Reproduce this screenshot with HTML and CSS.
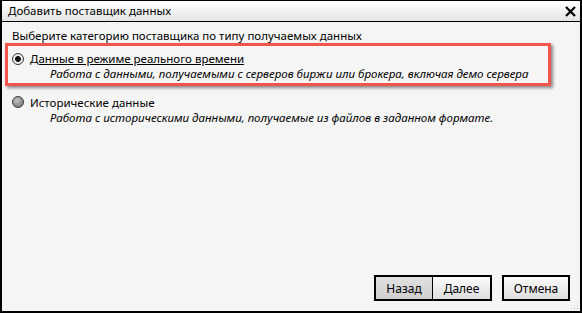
FILE: index.html
```html
<!DOCTYPE html>
<html lang="ru">
<head>
    <meta charset="UTF-8">
    <title>Добавить поставщик данных</title>
    <link rel="stylesheet" href="styles.css">
</head>
<body>
    <div class="window">
        <div class="titlebar">
            <span class="title">Добавить поставщик данных</span>
            <svg class="close" width="11" height="11" viewBox="0 0 11 11">
                <path d="M1 1 L10 10 M10 1 L1 10" stroke="#000" stroke-width="2.2"/>
            </svg>
        </div>

        <div class="content">
            <div class="heading">Выберите категорию поставщика по типу получаемых данных</div>

            <div class="highlight">
                <div class="option">
                    <span class="radio checked"></span>
                    <span class="label selected">Данные в режиме реального времени</span>
                </div>
                <div class="desc">Работа с данными, получаемыми с серверов биржи или брокера, включая демо сервера</div>
            </div>

            <div class="plain">
                <div class="option">
                    <span class="radio"></span>
                    <span class="label">Исторические данные</span>
                </div>
                <div class="desc">Работа с историческими данными, получаемые из файлов в заданном формате.</div>
            </div>
        </div>

        <div class="buttons">
            <button class="btn pressed">Назад</button>
            <button class="btn joined">Далее</button>
            <button class="btn cancel">Отмена</button>
        </div>
        <div class="grip"></div>
    </div>
</body>
</html>
```

FILE: styles.css
```css
:root {
    --window-bg: #f5f5f5;
    --border: #000000;
    --accent: #f2554b;
    --text: #000000;
}

body {
    margin: 0;
    font-family: 'Noto Sans', 'Open Sans', sans-serif;
    font-size: 11.5px;
    color: var(--text);
    background: #ffffff;
}

.window {
    position: relative;
    width: 582px;
    height: 313px;
    box-sizing: border-box;
    border: 2px solid var(--border);
    border-top-width: 1px;
    background: var(--window-bg);
    display: flex;
    flex-direction: column;
}

.titlebar {
    height: 20px;
    border-bottom: 1px solid var(--border);
    background: linear-gradient(#ffffff, #e4e4e4);
    display: flex;
    align-items: center;
    justify-content: space-between;
    padding: 0 4px 0 6px;
}

.title {
    line-height: 20px;
}

.close {
    margin-top: 1px;
}

.content {
    flex: 1;
    padding: 6px 0 0 3px;
}

.heading {
    padding-left: 7px;
    line-height: 15px;
}

.highlight {
    width: 538px;
    border: 3px solid var(--accent);
    padding: 5px 0 2px 2px;
    box-shadow: 2px 2px 3px rgba(0, 0, 0, 0.45);
}

.highlight .option {
    height: 15px;
}

.highlight .desc {
    line-height: 15px;
}

.plain {
    margin-top: 8px;
    padding-left: 5px;
}

.option {
    display: flex;
    align-items: center;
    height: 16px;
}

.radio {
    width: 12px;
    height: 12px;
    border: 1px solid #3c3c3c;
    border-radius: 50%;
    background: radial-gradient(circle at 40% 35%, #c4c4c4, #6a6a6a);
    margin: 0 6px 0 2px;
    box-sizing: border-box;
}

.radio.checked {
    background: radial-gradient(circle, #111111 0 2.6px, #f6f6f6 3.2px, #cfcfcf);
}

.label {
    line-height: 15px;
}

.label.selected {
    text-decoration: underline;
}

.desc {
    padding-left: 40px;
    font-style: italic;
    line-height: 16px;
}

.buttons {
    display: flex;
    justify-content: flex-end;
    padding: 0 10px 10px 0;
}

.btn {
    font-family: inherit;
    font-size: 12px;
    height: 26px;
    border: 1px solid var(--border);
    border-radius: 0;
    background: linear-gradient(#fbfbfb, #dedede);
    padding: 0;
    color: var(--text);
}

.btn.pressed {
    width: 59px;
    border-width: 2px 1px 2px 2px;
    background: linear-gradient(#e0e0e0, #cfcfcf);
}

.btn.joined {
    width: 59px;
    border-width: 2px 2px 2px 0;
}

.btn.cancel {
    width: 68px;
    margin-left: 10px;
    border-width: 2px;
}

.grip {
    position: absolute;
    right: 1px;
    bottom: 1px;
    width: 9px;
    height: 9px;
    background-image: radial-gradient(circle, #b5b5b5 0.8px, transparent 1px);
    background-size: 3px 3px;
    clip-path: polygon(100% 0, 100% 100%, 0 100%);
}
```
